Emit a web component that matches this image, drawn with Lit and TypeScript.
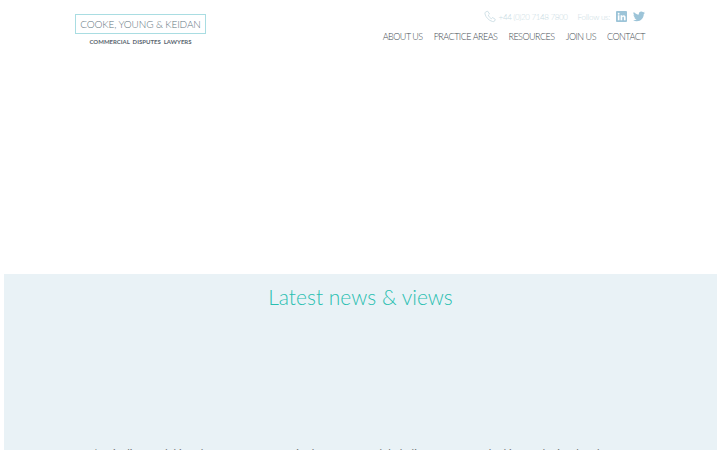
import { LitElement, html, css } from "lit";
import { customElement } from "lit/decorators.js";

@customElement("app-root")
export class AppRoot extends LitElement {
  static styles = css`
    :host { display: block; height: 450px; overflow: hidden; background: #fff; font-family: Lato, "Open Sans", sans-serif; }
    .header { display: flex; justify-content: space-between; height: 274px; padding: 0 75px; box-sizing: border-box; align-items: flex-start; }
    .logo { display: flex; flex-direction: column; align-items: center; width: 131px; padding-top: 14px; }
    .logo-box { box-sizing: border-box; width: 131px; height: 20px; border: 1px solid #a9dde2; display: flex; align-items: center; justify-content: center; font-size: 10px; font-weight: 300; color: #5f7480; letter-spacing: -0.15px; white-space: nowrap; }
    .logo-sub { margin-top: 3px; font-size: 6px; line-height: 9px; font-weight: 700; color: #5a6670; word-spacing: 1.5px; white-space: nowrap; }
    .right { display: flex; flex-direction: column; align-items: flex-end; padding-top: 9px; }
    .top { display: flex; align-items: center; height: 15px; color: #c9dbe3; font-size: 8px; font-weight: 300; white-space: nowrap; }
    .phone { margin-right: 3px; }
    .tel { letter-spacing: -0.35px; }
    .follow { margin-left: 10px; margin-right: 6px; letter-spacing: -0.2px; }
    .top svg { display: block; }
    .tw { margin-left: 6px; }
    .nav { display: flex; gap: 11px; margin-top: 6px; font-size: 9px; line-height: 14px; font-weight: 300; color: #444c52; letter-spacing: -0.5px; white-space: nowrap; }
    .news { margin: 0 3px 0 4px; height: 176px; background: #e9f2f6; overflow: hidden; display: flex; flex-direction: column; }
    h2 { margin: 9px 0 0; height: 27px; text-align: center; font-size: 21px; line-height: 27px; font-weight: 300; color: #2abfb1; }
    .cols { display: grid; grid-template-columns: repeat(3, 177px); justify-content: start; margin: 137px 0 0 91px; font-size: 11px; line-height: 14px; color: #777; }
    .cols div { white-space: nowrap; }
  `;

  render() {
    return html`
      <div class="header">
        <div class="logo">
          <div class="logo-box">COOKE, YOUNG &amp; KEIDAN</div>
          <div class="logo-sub">COMMERCIAL DISPUTES LAWYERS</div>
        </div>
        <div class="right">
          <div class="top">
            <svg class="phone" width="12" height="13" viewBox="0 0 24 24" fill="none" stroke="#c5d9e1" stroke-width="1.6"><path d="M4 2.500 7.500 1.500 11 7 8.600 9.400C9.800 12.400 12.200 15.200 15 16.400L17 14l5.500 3.500-1.200 3.600C20.800 22.200 19 22.600 17 22 9.500 20 3.500 13.500 2 7 1.600 5 2.400 3.200 4 2.500Z"/></svg>
            <span class="tel">+44 (0)20 7148 7800</span>
            <span class="follow">Follow us:</span>
            <svg width="11" height="11" viewBox="0 0 24 24"><rect width="24" height="24" rx="2" fill="#9cc4d8"/><path fill="#fff" d="M4 9.500h3.600V20H4zM5.800 4a2 2 0 1 1 0 4 2 2 0 0 1 0-4zM10 9.500h3.400V11c.6-1 1.900-1.800 3.500-1.800 3 0 4 2 4 4.900V20h-3.600v-5.300c0-1.400-.4-2.400-1.700-2.400-1.400 0-2 1-2 2.400V20H10z"/></svg>
            <svg class="tw" width="12" height="11" viewBox="0 0 24 20"><path fill="#9cc4d8" d="M24 2.400c-.9.400-1.800.7-2.800.8 1-.6 1.800-1.600 2.200-2.700-1 .6-2 1-3.100 1.200A4.900 4.900 0 0 0 11.900 6.200C7.800 6 4.200 4 1.700.9A4.900 4.900 0 0 0 3.200 7.500c-.8 0-1.600-.2-2.200-.6 0 2.400 1.700 4.400 3.900 4.900-.7.200-1.500.2-2.200.1.600 2 2.400 3.400 4.600 3.400A9.900 9.900 0 0 1 0 17.300 14 14 0 0 0 7.500 19.500c9.100 0 14.300-7.700 14-14.600 1-.700 1.800-1.500 2.500-2.500z"/></svg>
          </div>
          <nav class="nav">
            <span>ABOUT US</span><span>PRACTICE AREAS</span><span>RESOURCES</span><span>JOIN US</span><span>CONTACT</span>
          </nav>
        </div>
      </div>
      <section class="news">
        <h2>Latest news &amp; views</h2>
        <div class="cols">
          <div>\\ Miauling Hudgkin July 2021</div>
          <div>CYK in the Lawyer's Global Elite</div>
          <div>CYK ranked in Band 2 in Chambers</div>
        </div>
      </section>
    `;
  }
}
